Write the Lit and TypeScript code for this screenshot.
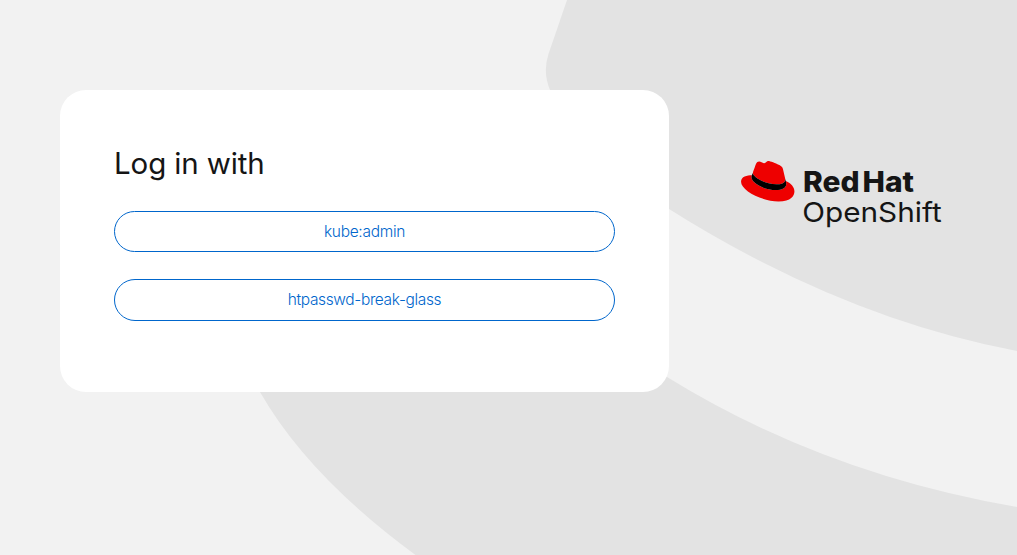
import { LitElement, html, css } from "lit";
import { customElement, property } from "lit/decorators.js";

@customElement("brand-logo")
class BrandLogo extends LitElement {
  static styles = css`
    :host { display: block; }
    .logo { display: block; overflow: visible; }
    .word { fill: #151515; font-family: Inter, "Liberation Sans", sans-serif; }
    .bold { font-weight: 800; font-size: 28px; word-spacing: -3.5px; }
    .regular { font-weight: 400; font-size: 27.5px; }
  `;
  render() {
    return html`
      <svg class="logo" width="202" height="70" viewBox="0 0 202 70" role="img" aria-label="Red Hat OpenShift">
        <g transform="translate(0.9 0.9) scale(0.2805)">
          <path fill="#e00" d="M127.47,83.49c12.51,0,30.61-2.58,30.61-17.46a14,14,0,0,0-.31-3.42l-7.45-32.36c-1.72-7.12-3.23-10.35-15.73-16.6C124.89,8.69,103.76.5,97.51.5,91.69.5,90,8,83.06,8c-6.68,0-11.64-5.6-17.89-5.6-6,0-9.91,4.09-12.93,12.5,0,0-8.41,23.72-9.49,27.16A6.43,6.43,0,0,0,42.53,44c0,9.22,36.3,39.45,84.94,39.45M160,72.07c1.73,8.19,1.73,9.05,1.73,10.13,0,14-15.74,21.77-36.43,21.77C78.54,104,37.58,76.6,37.58,58.49a18.45,18.45,0,0,1,1.51-7.33C22.27,52,.5,55,.5,74.22c0,31.48,74.59,70.28,133.65,70.28,45.28,0,56.7-20.48,56.7-36.65,0-12.72-11-27.16-30.83-35.78"/>
          <path d="M160,72.07c1.73,8.19,1.73,9.05,1.73,10.13,0,14-15.74,21.77-36.43,21.77C78.54,104,37.58,76.6,37.58,58.49a18.45,18.45,0,0,1,1.51-7.33l3.66-9.06A6.43,6.43,0,0,0,42.53,44c0,9.22,36.3,39.45,84.94,39.45,12.51,0,30.61-2.58,30.61-17.46a14,14,0,0,0-.31-3.42Z"/>
        </g>
        <text class="word bold" x="63" y="31.7" textLength="111" lengthAdjust="spacingAndGlyphs">Red Hat</text>
        <text class="word regular" x="62.2" y="62" textLength="139.500" lengthAdjust="spacingAndGlyphs">OpenShift</text>
      </svg>`;
  }
}

@customElement("login-card")
class LoginCard extends LitElement {
  @property({ attribute: false }) providers: { name: string; tracking: string }[] = [];

  static styles = css`
    :host {
      display: block;
      box-sizing: border-box;
      width: 609px;
      height: 302px;
      padding: 53px 54px 54px;
      border-radius: 26px;
      background: #fff;
      font-family: Inter, "Liberation Sans", sans-serif;
    }
    .title {
      margin: 0 0 28px;
      font-size: 29.5px;
      font-weight: 400;
      line-height: 40px;
      letter-spacing: -0.12px;
      color: #151515;
      white-space: nowrap;
    }
    .providers { display: flex; flex-direction: column; gap: 27px; margin: 0; padding: 0; list-style: none; }
    .provider {
      box-sizing: border-box;
      display: flex;
      align-items: center;
      justify-content: center;
      height: 41.3px;
      border: 1px solid #06c;
      border-radius: 21px;
      color: #06c;
      font-size: 15.5px;
      font-weight: 300;
      line-height: 24px;
      text-decoration: none;
      white-space: nowrap;
    }
  `;
  render() {
    return html`
      <h1 class="title">Log in with</h1>
      <ul class="providers">
        ${this.providers.map((p) => html`<li><a class="provider" href="#" style="letter-spacing:${p.tracking}">${p.name}</a></li>`)}
      </ul>`;
  }
}

@customElement("app-root")
class AppRoot extends LitElement {
  providers = [
    { name: "kube:admin", tracking: "-0.3px" },
    { name: "htpasswd-break-glass", tracking: "-0.37px" },
  ];

  static styles = css`
    :host {
      display: block;
      position: relative;
      box-sizing: border-box;
      width: 1017px;
      height: 555px;
      overflow: hidden;
      background: #f2f2f2;
    }
    .backdrop { position: absolute; inset: 0; }
    .page { position: relative; display: flex; align-items: flex-start; gap: 71px; padding: 90px 0 0 60px; }
    .brand { padding-top: 70px; }
  `;
  render() {
    return html`
      <svg class="backdrop" width="1017" height="555" viewBox="0 0 1017 555" fill="#e3e3e3" aria-hidden="true">
        <path d="M567 0L548.5 54Q542.5 72 550 90L669 209Q842 318 1017 351V0Z"/>
        <path d="M260 392Q308 476 415.500 555H1017V507Q824 474 667 377L640 360H260Z"/>
      </svg>
      <main class="page">
        <login-card .providers=${this.providers}></login-card>
        <brand-logo class="brand"></brand-logo>
      </main>`;
  }
}
